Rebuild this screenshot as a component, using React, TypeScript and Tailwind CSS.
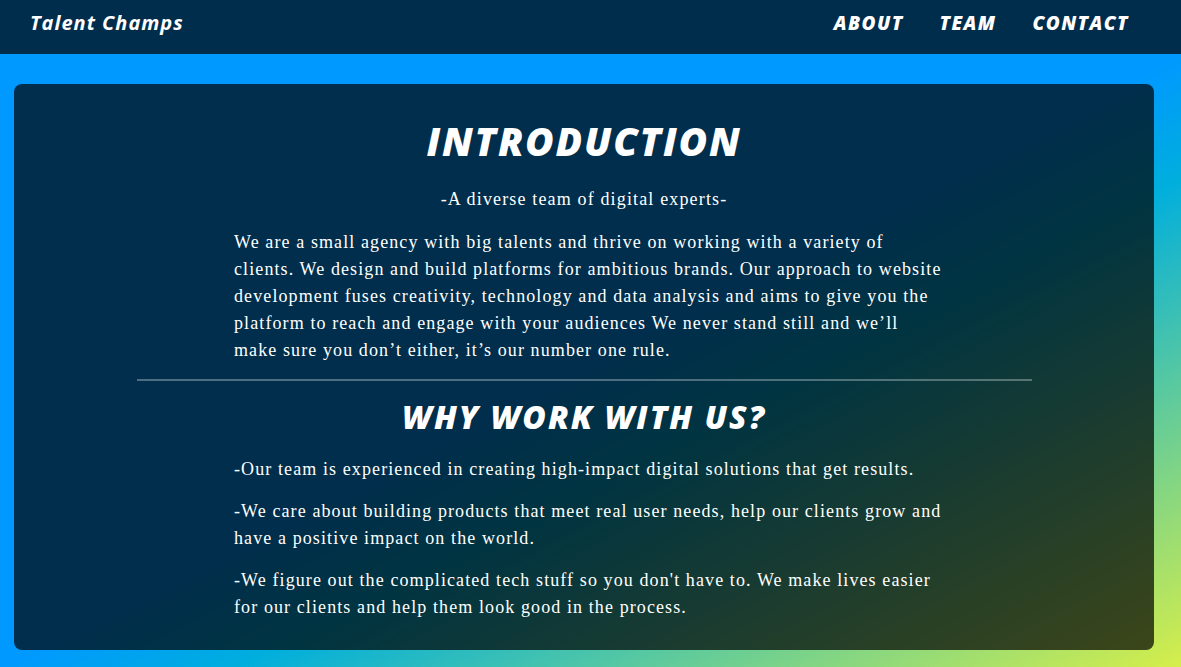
import React from "react";

const head = { fontFamily: '"Open Sans", "Noto Sans", sans-serif' };
const serif = { fontFamily: '"Liberation Serif", "DejaVu Serif", serif' };

export default function App() {
  return (
    <div className="w-[1181px] h-[667px] flex flex-col overflow-hidden">
      <header className="h-[54px] shrink-0 bg-[#012d4d] flex items-center justify-between pl-[30px] pr-[52px] pb-[8px] text-white" style={head}>
        <div className="text-[20px] font-bold italic tracking-[1px]">Talent Champs</div>
        <nav className="flex gap-[36px] text-[19px] font-extrabold italic tracking-[1.4px]">
          <span>ABOUT</span>
          <span>TEAM</span>
          <span>CONTACT</span>
        </nav>
      </header>
      <main className="flex-1 pt-[30px] pl-[14px] pr-[27px] pb-[17px] bg-[linear-gradient(to_bottom_right,#0099ff_50%,#00aedd_60%,#d6ee4a_100%)]">
        <section className="h-full rounded-[8px] bg-black/70 flex flex-col items-center text-white pt-[31px]">
          <h1 className="text-[39px] leading-[52px] font-extrabold italic tracking-[1.8px]" style={head}>INTRODUCTION</h1>
          <p className="mt-[19px] text-[18px] leading-[27px] tracking-[1.15px]" style={serif}>-A diverse team of digital experts-</p>
          <p className="mt-[16px] ml-[12px] w-[712px] text-[18px] leading-[27px] tracking-[1.1px]" style={serif}>
            We are a small agency with big talents and thrive on working with a variety of clients. We design and build platforms for ambitious brands. Our approach to website development fuses creativity, technology and data analysis and aims to give you the platform to reach and engage with your audiences We never stand still and we’ll make sure you don’t either, it’s our number one rule.
          </p>
          <div className="mt-[15px] w-[895px] h-[2px] bg-white/30" />
          <h2 className="mt-[14px] text-[32px] leading-[44px] font-extrabold italic tracking-[2px]" style={head}>WHY WORK WITH US?</h2>
          <div className="mt-[17px] ml-[12px] w-[712px] flex flex-col gap-[15px] text-[18px] leading-[27px] tracking-[1.1px]" style={serif}>
            <p>-Our team is experienced in creating high-impact digital solutions that get results.</p>
            <p>-We care about building products that meet real user needs, help our clients grow and have a positive impact on the world.</p>
            <p>-We figure out the complicated tech stuff so you don't have to. We make lives easier for our clients and help them look good in the process.</p>
          </div>
        </section>
      </main>
    </div>
  );
}
